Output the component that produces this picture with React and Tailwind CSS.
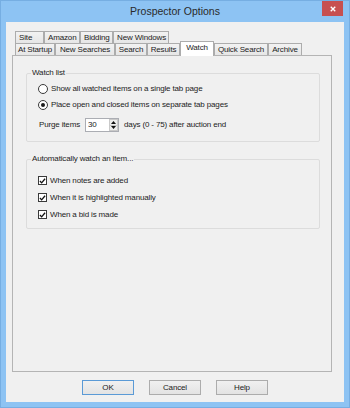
import React from "react"

const row1 = [
  { label: "Site", w: "w-[29px]" },
  { label: "Amazon", w: "w-[36px]" },
  { label: "Bidding", w: "w-[33px]" },
  { label: "New Windows", w: "w-[56px]" },
]

const row2 = [
  { label: "At Startup", w: "w-[40px]" },
  { label: "New Searches", w: "w-[60px]" },
  { label: "Search", w: "w-[32px]" },
  { label: "Results", w: "w-[33px]" },
  { label: "Watch", w: "w-[34px]", active: true },
  { label: "Quick Search", w: "w-[54px]" },
  { label: "Archive", w: "w-[34px]" },
]

function Radio({ checked }) {
  return (
    <span className="w-[10px] h-[10px] rounded-full border border-[#3a3a3a] bg-white flex items-center justify-center shrink-0">
      {checked && <span className="w-[4px] h-[4px] rounded-full bg-[#1a1a1a]" />}
    </span>
  )
}

function Check() {
  return (
    <span className="w-[9px] h-[9px] border border-[#3a3a3a] bg-white flex items-center justify-center shrink-0">
      <svg viewBox="0 0 9 9" className="w-[8px] h-[8px]">
        <path d="M1.2 4.6 L3.4 6.9 L7.8 1.6" stroke="#111" strokeWidth="1.7" fill="none" />
      </svg>
    </span>
  )
}

function Button({ children, primary }) {
  return (
    <button
      className={
        "w-[52px] h-[15px] flex items-center justify-center bg-gradient-to-b from-[#f0f0f0] to-[#e3e3e3] text-[8px] leading-none text-[#1c1c1c] border " +
        (primary ? "border-[#5a9ad6]" : "border-[#acacac]")
      }
    >
      {children}
    </button>
  )
}

function App() {
  return (
    <div className="w-[350px] h-[408px] bg-[#8dc3f3] border border-[#76aee2] flex flex-col font-['Liberation_Sans',Arial,sans-serif] tracking-[-0.15px] text-[#1c1c1c]">
      {/* title bar */}
      <div className="h-[21px] grid grid-cols-[1fr_auto_1fr]">
        <div />
        <div className="text-[10.5px] leading-[21px] text-[#2a2a2a] tracking-normal">Prospector Options</div>
        <div className="flex justify-end items-start pr-[6px]">
          <div className="w-[21px] h-[15px] bg-[#c75050] flex items-center justify-center">
            <svg viewBox="0 0 8 8" className="w-[6px] h-[6px]">
              <path d="M1 1 L7 7 M7 1 L1 7" stroke="#fff" strokeWidth="1.8" />
            </svg>
          </div>
        </div>
      </div>

      {/* client area */}
      <div className="mx-[5px] mb-[5px] flex-1 bg-[#f0f0f0] flex flex-col pt-[9px] pl-[6px] pr-[12px]">
        <div className="flex ml-[3px] h-[12px]">
          {row1.map((t) => (
            <div
              key={t.label}
              className={t.w + " h-[12px] border border-b-0 border-[#acacac] bg-gradient-to-b from-[#f2f2f2] to-[#e6e6e6] text-[8px] leading-[11px] pl-[3px] whitespace-nowrap"}
            >
              {t.label}
            </div>
          ))}
        </div>
        <div className="flex items-end ml-[3px] h-[12px]">
          {row2.map((t) =>
            t.active ? (
              <div
                key={t.label}
                className={t.w + " h-[15px] -mb-px relative z-10 border border-b-0 border-[#acacac] bg-white text-[8px] leading-[12px] text-center whitespace-nowrap"}
              >
                {t.label}
              </div>
            ) : (
              <div
                key={t.label}
                className={t.w + " h-[12px] border border-b-0 border-[#acacac] bg-gradient-to-b from-[#f2f2f2] to-[#e6e6e6] text-[8px] leading-[11px] text-center whitespace-nowrap"}
              >
                {t.label}
              </div>
            )
          )}
        </div>

        {/* tab panel */}
        <div className="h-[317px] border border-[#b4b4b4] bg-[#f0f0f0] pt-[12px] pl-[13px] pr-[11px] flex flex-col text-[8px]">
          <fieldset className="border border-[#dcdcdc] rounded-[2px]">
            <legend className="ml-[4px] px-[1px] leading-[10px]">Watch list</legend>
            <div className="pl-[11px] pt-[3px] pb-[8px] flex flex-col">
              <div className="h-[16px] flex items-center gap-[3px]">
                <Radio />
                <span>Show all watched items on a single tab page</span>
              </div>
              <div className="h-[16px] flex items-center gap-[3px]">
                <Radio checked />
                <span>Place open and closed items on separate tab pages</span>
              </div>
              <div className="h-[16px] mt-[4px] flex items-center pl-[1px]">
                <span>Purge items</span>
                <div className="ml-[5px] w-[34px] h-[14px] bg-white border border-[#abadb3] flex items-center">
                  <span className="flex-1 pl-[2px] leading-none">30</span>
                  <div className="w-[9px] h-[12px] flex flex-col">
                    <div className="flex-1 bg-[#eeeeee] border border-[#c9c9c9] flex items-center justify-center">
                      <svg viewBox="0 0 5 3" className="w-[5px] h-[3px]"><path d="M0 3 L2.5 0 L5 3 Z" fill="#111" /></svg>
                    </div>
                    <div className="flex-1 bg-[#eeeeee] border border-t-0 border-[#c9c9c9] flex items-center justify-center">
                      <svg viewBox="0 0 5 3" className="w-[5px] h-[3px]"><path d="M0 0 L5 0 L2.5 3 Z" fill="#111" /></svg>
                    </div>
                  </div>
                </div>
                <span className="ml-[5px]">days (0 - 75) after auction end</span>
              </div>
            </div>
          </fieldset>

          <fieldset className="mt-[12px] border border-[#dcdcdc] rounded-[2px]">
            <legend className="ml-[4px] px-[1px] leading-[10px]">Automatically watch an item...</legend>
            <div className="pl-[11px] pt-[8px] pb-[5px] flex flex-col">
              <div className="h-[17px] flex items-center gap-[3px]">
                <Check />
                <span>When notes are added</span>
              </div>
              <div className="h-[17px] flex items-center gap-[3px]">
                <Check />
                <span>When it is highlighted manually</span>
              </div>
              <div className="h-[17px] flex items-center gap-[3px]">
                <Check />
                <span>When a bid is made</span>
              </div>
            </div>
          </fieldset>
        </div>

        {/* buttons */}
        <div className="mt-[8px] flex justify-center gap-[15px] pl-[6px]">
          <Button primary>OK</Button>
          <Button>Cancel</Button>
          <Button>Help</Button>
        </div>
      </div>
    </div>
  )
}

export default App
